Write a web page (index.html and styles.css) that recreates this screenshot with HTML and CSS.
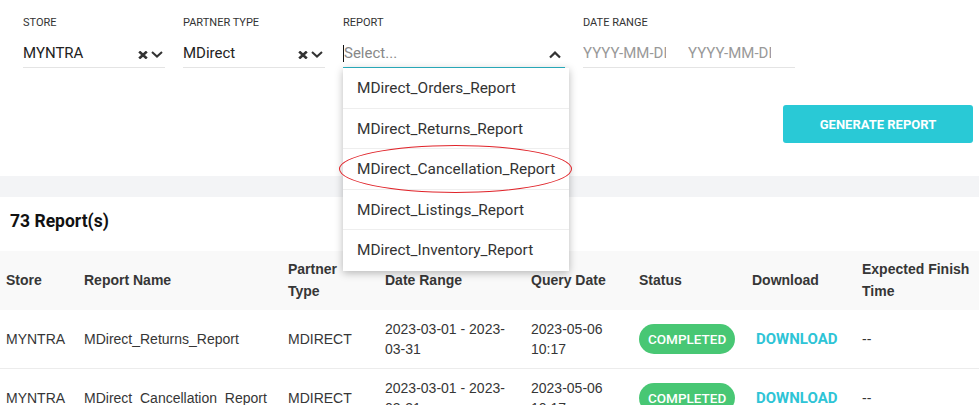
FILE: index.html
```html
<!DOCTYPE html>
<html>
<head>
<meta charset="utf-8">
<link rel="stylesheet" href="styles.css">
</head>
<body>
<div class="top">
  <div class="filters">
    <div class="field f-store">
      <div class="label">STORE</div>
      <div class="control">
        <span class="value">MYNTRA</span>
        <span class="icons">
          <svg width="10" height="8" viewBox="0 0 10 8"><path d="M1.2 0.6 L8.8 7.4 M8.8 0.6 L1.2 7.4" stroke="#333" stroke-width="2.7"/></svg>
          <svg width="12" height="7" viewBox="0 0 12 7"><path d="M1 1 L6 5.6 L11 1" stroke="#333" stroke-width="2" fill="none"/></svg>
        </span>
      </div>
    </div>
    <div class="field f-partner">
      <div class="label">PARTNER TYPE</div>
      <div class="control">
        <span class="value">MDirect</span>
        <span class="icons">
          <svg width="10" height="8" viewBox="0 0 10 8"><path d="M1.2 0.6 L8.8 7.4 M8.8 0.6 L1.2 7.4" stroke="#333" stroke-width="2.7"/></svg>
          <svg width="12" height="7" viewBox="0 0 12 7"><path d="M1 1 L6 5.6 L11 1" stroke="#333" stroke-width="2" fill="none"/></svg>
        </span>
      </div>
    </div>
    <div class="field f-report">
      <div class="label">REPORT</div>
      <div class="control active">
        <span class="value placeholder"><span class="caret"></span>Select...</span>
        <span class="icons">
          <svg width="12" height="8" viewBox="0 0 12 8"><path d="M1 6.5 L6 1.6 L11 6.5" stroke="#333" stroke-width="2.2" fill="none"/></svg>
        </span>
      </div>
      <ul class="menu">
        <li>MDirect_Orders_Report</li>
        <li>MDirect_Returns_Report</li>
        <li>MDirect_Cancellation_Report</li>
        <li>MDirect_Listings_Report</li>
        <li>MDirect_Inventory_Report</li>
      </ul>
      <div class="ring"></div>
    </div>
    <div class="field f-date">
      <div class="label">DATE RANGE</div>
      <div class="control dates">
        <span class="date">YYYY-MM-DD</span>
        <span class="date">YYYY-MM-DD</span>
      </div>
    </div>
  </div>
  <div class="actions">
    <button class="generate">GENERATE REPORT</button>
  </div>
</div>
<div class="band"></div>
<div class="count">73 Report(s)</div>
<table class="reports">
  <colgroup>
    <col style="width:78px"><col style="width:204px"><col style="width:97px"><col style="width:146px"><col style="width:108px"><col style="width:113px"><col style="width:110px"><col style="width:123px">
  </colgroup>
  <thead>
    <tr>
      <th>Store</th><th>Report Name</th><th class="narrow">Partner Type</th><th>Date Range</th><th>Query Date</th><th>Status</th><th>Download</th><th>Expected Finish Time</th>
    </tr>
  </thead>
  <tbody>
    <tr>
      <td>MYNTRA</td><td>MDirect_Returns_Report</td><td>MDIRECT</td><td>2023-03-01 - 2023-03-31</td><td>2023-05-06 10:17</td>
      <td><span class="pill">COMPLETED</span></td><td><a class="dl">DOWNLOAD</a></td><td>--</td>
    </tr>
    <tr>
      <td>MYNTRA</td><td>MDirect_Cancellation_Report</td><td>MDIRECT</td><td>2023-03-01 - 2023-03-31</td><td>2023-05-06 10:17</td>
      <td><span class="pill">COMPLETED</span></td><td><a class="dl">DOWNLOAD</a></td><td>--</td>
    </tr>
  </tbody>
</table>
</body>
</html>
```

FILE: styles.css
```css
* { box-sizing: border-box; }
html, body { margin: 0; padding: 0; background: #fff; }
body { font-family: Roboto, "Liberation Sans", sans-serif; color: #333; width: 979px; height: 405px; overflow: hidden; }

.top { height: 176px; padding: 16px 6px 0 23px; }
.filters { display: flex; gap: 18px; align-items: flex-start; }
.field { position: relative; }
.f-store, .f-partner { width: 142px; }
.f-report { width: 222px; }
.f-date { width: 212px; }
.label { font-size: 11px; line-height: 13px; color: #333; }
.control { height: 31px; margin-top: 8px; padding-top: 2px; border-bottom: 1px solid #e4e4e4; display: flex; align-items: center; justify-content: space-between; }
.control.active { border-bottom: 1px solid #2cb5c6; }
.value { font-size: 15px; color: #222; display: flex; align-items: center; }
.placeholder { color: #888; }
.caret { display: inline-block; width: 1px; height: 17px; background: #111; }
.icons { display: flex; align-items: center; gap: 3px; padding-right: 2px; margin-top: 3px; }
.f-report .icons { padding-right: 4px; margin-top: 4px; }
.dates { justify-content: flex-start; gap: 22px; }
.date { width: 83px; overflow: hidden; white-space: nowrap; font-size: 15px; color: #999; }

.menu { position: absolute; left: 0; top: 52px; width: 226px; margin: 0; padding: 0; list-style: none; background: #fff; box-shadow: 0 2px 8px rgba(0,0,0,0.28); z-index: 5; }
.menu li { height: 40.6px; line-height: 40px; padding-left: 14px; font-size: 15.4px; color: #333; border-bottom: 1px solid #eee; }
.menu li:last-child { border-bottom: none; }
.ring { position: absolute; left: -4px; top: 129px; width: 233px; height: 48px; border: 1px solid #e0242a; border-radius: 50%; z-index: 6; }

.actions { display: flex; justify-content: flex-end; margin-top: 37px; }
.generate { width: 190px; height: 38px; background: #29c9d6; border: none; border-radius: 3px; color: #fff; font-family: Roboto, sans-serif; font-weight: 700; font-size: 13px; }

.band { height: 21px; background: #f3f4f6; }
.count { height: 54px; padding: 0 0 6px 10px; font-size: 17.5px; font-weight: 700; color: #111; display: flex; align-items: center; }

.reports { width: 979px; border-collapse: collapse; table-layout: fixed; font-family: "Liberation Sans", Arial, sans-serif; font-size: 14px; }
.reports th { background: #f9f9f9; text-align: left; font-weight: 700; color: #363636; line-height: 22px; height: 59px; padding: 6px 4px 8px 6px; vertical-align: middle; }
.reports th.narrow { padding-right: 10px; }
.reports td { color: #363636; line-height: 20px; height: 58px; padding: 9px 6px; border-bottom: 1px solid #ececec; vertical-align: middle; }
.pill { display: inline-block; background: #48c774; color: #fff; border-radius: 15px; height: 30px; line-height: 30px; padding: 0 9px; font-family: Roboto, sans-serif; font-size: 13.5px; font-weight: 500; }
.dl { color: #2ec4d6; font-family: Roboto, sans-serif; font-weight: 700; font-size: 15px; padding-left: 4px; }
```
